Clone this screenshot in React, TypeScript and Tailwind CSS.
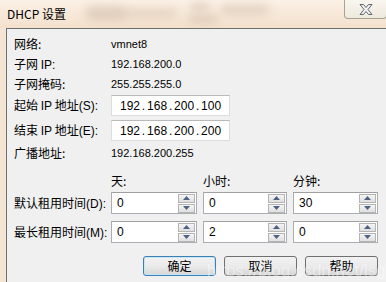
import React from 'react';

const cjk = { fontFamily: '"Microsoft YaHei", "Noto Sans CJK SC", "Liberation Sans", sans-serif' };
const latin = { fontFamily: 'Tahoma, "Liberation Sans", "Noto Sans CJK SC", sans-serif' };

const Spinner = ({ value, w }: { value: string; w: string }) => (
  <div className={`${w} h-[22px] flex items-center bg-white border border-[#abadb3] border-t-[#a0a0a0]`}>
    <span className="flex-1 pl-[5px] text-[12px] text-black leading-none" style={latin}>
      {value}
    </span>
    <div className="flex flex-col gap-[1px] mr-[1px]">
      <div className="w-[17px] h-[9px] flex items-center justify-center border border-[#b4b4b4] bg-gradient-to-b from-[#f5f5f5] to-[#dfdfdf]">
        <svg width="7" height="4" viewBox="0 0 7 4">
          <path d="M0 4 L3.5 0 L7 4 Z" fill="#4d6185" />
        </svg>
      </div>
      <div className="w-[17px] h-[9px] flex items-center justify-center border border-[#b4b4b4] bg-gradient-to-b from-[#f5f5f5] to-[#dfdfdf]">
        <svg width="7" height="4" viewBox="0 0 7 4">
          <path d="M0 0 L7 0 L3.5 4 Z" fill="#4d6185" />
        </svg>
      </div>
    </div>
  </div>
);

const IpBox = ({ parts }: { parts: string[] }) => (
  <div className="w-[119px] h-[21px] flex items-center pl-[8px] bg-white border border-[#dcdcdc] border-t-[#b9b9b9] text-[12px] text-black" style={latin}>
    {parts.map((p, i) => (
      <span key={i} className="flex">
        {i > 0 && <span className="w-[7px] text-center">.</span>}
        <span>{p}</span>
      </span>
    ))}
  </div>
);

const Label = ({ children }: { children: React.ReactNode }) => (
  <div className="w-[97px] text-[12px] text-black whitespace-nowrap" style={cjk}>
    {children}
  </div>
);

const Btn = ({ text, def }: { text: string; def?: boolean }) => (
  <button
    className={`w-[73px] h-[20px] rounded-[3px] border text-[12px] text-black bg-gradient-to-b from-[#f2f2f2] via-[#ebebeb] to-[#d6d6d6] ${def ? 'border-[#3c7fb1] shadow-[inset_0_0_0_1px_#c7e6f8]' : 'border-[#707070]'}`}
    style={cjk}
  >
    {text}
  </button>
);

export default function App() {
  return (
    <div className="w-[386px] h-[282px] overflow-hidden flex flex-col bg-[#f4e4d3] relative">
      {/* title bar */}
      <div className="h-[28px] flex items-start relative bg-gradient-to-b from-[#fbf1e6] to-[#f3e0cc]">
        <div className="absolute left-[85px] top-[6px] w-[40px] h-[14px] rounded-full bg-[#c9b4a0] blur-[5px] opacity-50" />
        <div className="absolute left-[118px] top-[8px] w-[60px] h-[10px] rounded-full bg-[#d6c2ad] blur-[5px] opacity-50" />
        <div className="absolute left-[190px] top-[3px] w-[20px] h-[8px] rounded-full bg-[#c9b4a0] blur-[4px] opacity-50" />
        <div className="absolute left-[220px] top-[5px] w-[50px] h-[10px] rounded-full bg-[#cdb9a5] blur-[5px] opacity-50" />
        <div className="absolute left-[188px] top-[15px] w-[30px] h-[8px] rounded-full bg-[#c9b4a0] blur-[4px] opacity-50" />
        <span className="relative ml-[7px] mt-[5px] text-[12px] text-black" style={cjk}>
          DHCP 设置
        </span>
        <div className="relative ml-auto mr-[-1px] w-[43px] h-[19px] rounded-b-[4px] border border-t-0 border-[#a8a196] bg-gradient-to-b from-[#f9f6ef] to-[#efe9dd] flex items-center justify-center">
          <svg width="14" height="11" viewBox="0 0 14 11">
            <path
              d="M1 0.5 H4.5 L7 3.5 L9.5 0.5 H13 L9 5.5 L13 10.5 H9.5 L7 7.5 L4.5 10.5 H1 L5 5.5 Z"
              fill="#f2f2f2"
              stroke="#5f6670"
              strokeWidth="1"
              strokeLinejoin="round"
            />
          </svg>
        </div>
      </div>

      {/* client area */}
      <div className="flex-1 ml-[6px] bg-[#f0f0f0] border-l border-t border-[#6e6e6e] pl-[7px] pt-[5px] relative">
        <div className="h-[20px] flex items-center">
          <Label>网络:</Label>
          <span className="text-[11px] text-black" style={latin}>vmnet8</span>
        </div>
        <div className="h-[20px] flex items-center">
          <Label>
            子网 <span style={latin}>IP:</span>
          </Label>
          <span className="text-[11px] text-black" style={latin}>192.168.200.0</span>
        </div>
        <div className="h-[20px] flex items-center">
          <Label>子网掩码:</Label>
          <span className="text-[11px] text-black" style={latin}>255.255.255.0</span>
        </div>
        <div className="h-[21px] mt-[1px] flex items-center">
          <Label>
            起始 <span style={latin}>IP</span> 地址<span style={latin}>(S):</span>
          </Label>
          <IpBox parts={['192', '168', '200', '100']} />
        </div>
        <div className="h-[21px] mt-[4px] flex items-center">
          <Label>
            结束 <span style={latin}>IP</span> 地址<span style={latin}>(E):</span>
          </Label>
          <IpBox parts={['192', '168', '200', '200']} />
        </div>
        <div className="h-[20px] mt-[2px] flex items-center">
          <Label>广播地址:</Label>
          <span className="text-[11px] text-black" style={latin}>192.168.200.255</span>
        </div>

        <div className="h-[20px] mt-[8px] flex items-center text-[12px] text-black" style={cjk}>
          <div className="w-[97px]" />
          <span className="w-[92px]">天:</span>
          <span className="w-[90px]">小时:</span>
          <span>分钟:</span>
        </div>
        <div className="h-[22px] mt-[1px] flex items-center">
          <Label>
            默认租用时间<span style={latin}>(D):</span>
          </Label>
          <div className="flex gap-[6px]">
            <Spinner value="0" w="w-[86px]" />
            <Spinner value="0" w="w-[84px]" />
            <Spinner value="30" w="w-[85px]" />
          </div>
        </div>
        <div className="h-[22px] mt-[7px] flex items-center">
          <Label>
            最长租用时间<span style={latin}>(M):</span>
          </Label>
          <div className="flex gap-[6px]">
            <Spinner value="0" w="w-[86px]" />
            <Spinner value="2" w="w-[84px]" />
            <Spinner value="0" w="w-[85px]" />
          </div>
        </div>

        <div className="mt-[13px] flex justify-end gap-[8px] pr-[8px]">
          <Btn text="确定" def />
          <Btn text="取消" />
          <Btn text="帮助" />
        </div>

        <span
          className="absolute left-[200px] top-[229px] text-[17px] text-white opacity-40 whitespace-nowrap pointer-events-none"
          style={{ fontFamily: '"Liberation Sans", sans-serif' }}
        >
          https://blog.csdn.net/lsgg
        </span>
      </div>
    </div>
  );
}
